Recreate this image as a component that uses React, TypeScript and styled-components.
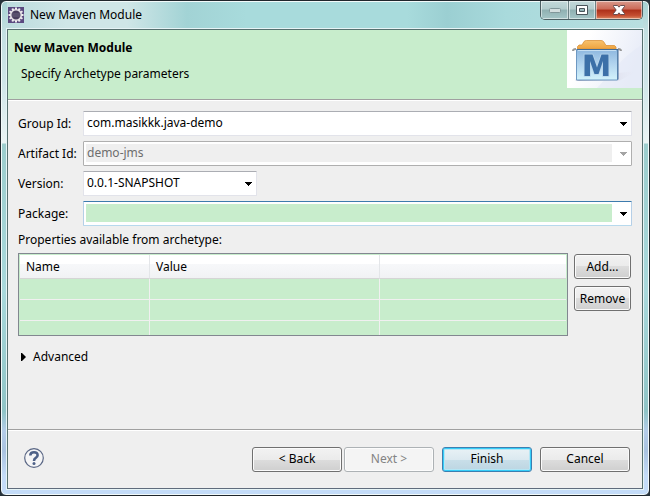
import React, { useState } from "react";
import styled, { createGlobalStyle, css } from "styled-components";

const font = '"Noto Sans", "Open Sans", sans-serif';

const GlobalStyle = createGlobalStyle`
  *, *::before, *::after { box-sizing: border-box; }
  body { margin: 0; background: #26323a; font: 12px/16px ${font}; color: #000; }
  button, select, input { font: inherit; color: inherit; margin: 0; }
  h1, h2, p { margin: 0; font: inherit; }
`;

const glassSides =
  "linear-gradient(to bottom, #a6d2d3 0, #c3dfe1 30px, #cfe5e8 80px, #eaf4f4 142px, #9ccdcd 143px, #a9d9dc 290px, #8fc4c6 410px, #b4cce8 430px, #a9c3e0 450px, #c4dcf8 475px, #c4dcf8 100%)";

const Window = styled.main`
  display: flex;
  flex-direction: column;
  min-height: 100vh;
  border: 1px solid #20262c;
  border-radius: 6px;
  background: ${glassSides};
  box-shadow: inset 0 0 0 1px #f2fafa;
`;

const TitleBar = styled.header`
  display: flex;
  align-items: center;
  height: 28px;
  margin: 0 6px;
  background: linear-gradient(to right, #bddcde, #cfe6e7 60px, #cfe6e7 120px, #a2d3d5 180px, #a8dbdc 240px, #a8dbdc 400px, #9bcfd2 440px, #a9dadc 500px, #b9dfe0);
  background-size: 100% 27px;
  background-position: 0 1px;
  background-repeat: no-repeat;
`;

const AppIcon = styled.svg`
  width: 16px;
  height: 16px;
  margin-left: 1px;
`;

const Title = styled.h1`
  flex: 1;
  margin-left: 6px;
`;

const WindowControls = styled.div`
  display: flex;
  align-self: flex-start;
  height: 19px;
  border: 1px solid #4c5f63;
  border-top: 0;
  border-radius: 0 0 5px 5px;
  overflow: hidden;
`;

const ControlButton = styled.button<{ $kind: "plain" | "close" }>`
  display: flex;
  align-items: center;
  justify-content: center;
  width: ${(p) => (p.$kind === "close" ? 47 : 27)}px;
  padding: 0;
  border: 0;
  border-left: ${(p) => (p.$kind === "close" ? "1px solid #4c2a28" : "0")};
  box-shadow: inset 0 0 0 1px rgba(255, 255, 255, 0.5);
  background: ${(p) =>
    p.$kind === "close"
      ? "linear-gradient(#d99a8c 0, #cb6a58 45%, #ad3019 50%, #c44d31 80%, #dc8a63)"
      : "linear-gradient(#c3d9da 0, #b3cccd 45%, #8fb0b2 50%, #a5c6c7)"};
  & + & { border-left: 1px solid #6d8285; }
`;

const Client = styled.div`
  display: flex;
  flex: 1;
  flex-direction: column;
  margin: 0 6px 6px;
  border: 1px solid #56706f;
  border-bottom-color: #5f6b7c;
  outline: 1px solid #e6f4f6;
  background: #efefef;
`;

const Banner = styled.section`
  display: flex;
  justify-content: space-between;
  align-items: flex-start;
  height: 71px;
  background: #c8edcc;
  border-bottom: 1px solid #fff;
  box-shadow: inset 0 -1px 0 #a0a0a0;
`;

const BannerText = styled.div`
  padding: 10px 6px;
`;

const BannerTitle = styled.h2`
  font-weight: 700;
`;

const BannerMessage = styled.p`
  padding: 10px 7px;
`;

const BannerArt = styled.svg`
  flex: none;
  width: 75px;
  height: 58px;
`;

const Content = styled.section`
  flex: 1;
  padding: 10px;
`;

const Fields = styled.div`
  display: grid;
  grid-template-columns: 65px 1fr;
  row-gap: 5px;
  align-items: center;
`;

const FieldLabel = styled.label`
  white-space: nowrap;
`;

type Tone = "normal" | "disabled" | "focus";

const comboTones = {
  normal: css`border-color: #abadb3 #e2e3ea #e2e3ea;`,
  disabled: css`border-color: #afafaf;`,
  focus: css`border-color: #3d7bad #b5cfe7 #b7d9ed;`,
};

const fillTones = { normal: "#fff", disabled: "#efefef", focus: "#c8edcc" };

const Combo = styled.div<{ $tone: Tone; $short?: boolean }>`
  position: relative;
  width: ${(p) => (p.$short ? "174px" : "auto")};
  height: 25px;
  padding: 2px;
  border: 1px solid;
  border-radius: 1px;
  background: #fff;
  ${(p) => comboTones[p.$tone]}
`;

const ComboSelect = styled.select<{ $tone: Tone }>`
  display: block;
  width: 100%;
  height: 18px;
  padding: 0 18px 0 1px;
  border: 0;
  outline: 0;
  appearance: none;
  line-height: 16px;
  color: ${(p) => (p.$tone === "disabled" ? "#6d6d6d" : "#000")};
  opacity: 1;
  background: linear-gradient(${(p) => fillTones[p.$tone]}, ${(p) => fillTones[p.$tone]}) no-repeat;
  background-size: calc(100% - 17px) 100%;
`;

const ComboArrow = styled.svg`
  position: absolute;
  top: 10px;
  right: 4px;
  width: 7px;
  height: 4px;
  pointer-events: none;
`;

const SectionLabel = styled.p`
  margin-top: 6px;
`;

const Properties = styled.div`
  display: flex;
  align-items: flex-start;
  gap: 5px;
  margin-top: 5px;
`;

const TableFrame = styled.div`
  flex: 1;
  height: 83px;
  padding: 1px;
  border: 1px solid #828790;
  background: #c8edcc;
  overflow: hidden;
`;

const Table = styled.table`
  width: 100%;
  table-layout: fixed;
  border-collapse: separate;
  border-spacing: 0;
`;

const HeadCell = styled.th<{ $width?: number }>`
  width: ${(p) => (p.$width ? `${p.$width}px` : "auto")};
  height: 24px;
  padding: 0 6px;
  border-right: 1px solid #e4e6e9;
  border-bottom: 1px solid #d5d5d5;
  background: linear-gradient(#fff 9px, #f7f8fa 9px, #f1f2f4);
  font-weight: 400;
  text-align: left;
  &:last-child { border-right: 0; }
`;

const Cell = styled.td`
  height: 21px;
  padding: 0;
  border-right: 1px solid #f0f0f0;
  border-bottom: 1px solid #f0f0f0;
  &:last-child { border-right: 0; }
`;

const SideButtons = styled.div`
  display: flex;
  flex-direction: column;
  gap: 7px;
  padding: 1px;
`;

const buttonTones = {
  normal: css`
    border-color: #707070;
    background: linear-gradient(#f2f2f2, #ebebeb 50%, #dddddd 50%, #cfcfcf);
    box-shadow: inset 0 0 0 1px #fbfbfb;
  `,
  disabled: css`
    border-color: #adb2b5;
    background: #f4f4f4;
    box-shadow: inset 0 0 0 1px #fcfcfc;
    color: #838383;
  `,
  primary: css`
    border-color: #3c7fb1;
    background: linear-gradient(#e9f2f6, #dbe9f0 50%, #c9dfe9 50%, #bcd5e2);
    box-shadow: inset 0 0 0 1px #35cdf8, inset 0 0 0 2px #b5e6f5;
  `,
};

const PushButton = styled.button<{ $tone?: keyof typeof buttonTones; $wide?: boolean }>`
  width: ${(p) => (p.$wide ? 90 : 57)}px;
  height: 25px;
  padding: 0;
  border: 1px solid;
  border-radius: 3px;
  white-space: nowrap;
  ${(p) => buttonTones[p.$tone ?? "normal"]}
`;

const Advanced = styled.button`
  display: flex;
  align-items: center;
  gap: 7px;
  margin-top: 13px;
  padding: 0 3px;
  border: 0;
  background: none;
`;

const Footer = styled.footer`
  display: flex;
  align-items: center;
  height: 59px;
  padding: 0 12px 0 16px;
  border-top: 1px solid #a0a0a0;
  box-shadow: inset 0 1px 0 #fff;
`;

const HelpButton = styled.button`
  display: flex;
  margin-right: auto;
  padding: 0 0 2px;
  border: 0;
  background: none;
`;

const ButtonPair = styled.div`
  display: flex;
  gap: 2px;
`;

const Actions = styled.div`
  display: flex;
  gap: 8px;
`;

const teeth = Array.from({ length: 12 }, (_, i) => i * 30);

type ComboFieldProps = { id: string; label: string; value: string; tone?: Tone; short?: boolean };

function ComboField({ id, label, value, tone = "normal", short }: ComboFieldProps) {
  return (
    <>
      <FieldLabel htmlFor={id}>{label}</FieldLabel>
      <Combo $tone={tone} $short={short}>
        <ComboSelect id={id} $tone={tone} disabled={tone === "disabled"} defaultValue={value}>
          <option value={value}>{value}</option>
        </ComboSelect>
        <ComboArrow viewBox="0 0 7 4" shapeRendering="crispEdges" aria-hidden="true">
          <path d="M0 0h7v1H6v1H5v1H4v1H3V3H2V2H1V1H0z" fill={tone === "disabled" ? "#a5a5a5" : "#000"} />
        </ComboArrow>
      </Combo>
    </>
  );
}

function EclipseIcon() {
  return (
    <AppIcon viewBox="0 0 16 16" aria-hidden="true">
      <rect width="16" height="16" fill="#5b4a80" />
      <g fill="#f0edf0">
        {teeth.map((a) => (
          <rect key={a} x="7" y="0.500" width="2" height="3" transform={`rotate(${a} 8 8)`} />
        ))}
      </g>
      <circle cx="8" cy="8" r="5.300" fill="#4a3f5e" stroke="#e8e4e8" strokeWidth="1.600" />
      <path d="M3.800 7h8.400M3.800 9h8.400" stroke="#77708a" strokeWidth="0.700" />
    </AppIcon>
  );
}

function MavenArt() {
  return (
    <BannerArt viewBox="0 0 75 58" aria-hidden="true">
      <defs>
        <linearGradient id="sky" x1="0" y1="0" x2="1" y2="0.3">
          <stop offset="0.3" stopColor="#fff" />
          <stop offset="1" stopColor="#e9edf8" />
        </linearGradient>
        <linearGradient id="box" x1="0" y1="0" x2="0" y2="1">
          <stop offset="0" stopColor="#8db7df" />
          <stop offset="0.5" stopColor="#b3d5ef" />
          <stop offset="1" stopColor="#d3f3fb" />
        </linearGradient>
        <linearGradient id="folder" x1="0" y1="0" x2="0" y2="1">
          <stop offset="0" stopColor="#f8c16c" />
          <stop offset="1" stopColor="#eda33f" />
        </linearGradient>
        <linearGradient id="shade" x1="0" y1="0" x2="1" y2="0">
          <stop offset="0" stopColor="#a5a0b5" />
          <stop offset="1" stopColor="#e8e8f2" stopOpacity="0" />
        </linearGradient>
      </defs>
      <rect width="75" height="58" fill="url(#sky)" />
      <path d="M30 58C45 42 57 25 75 15v43z" fill="#e4e9f6" opacity="0.6" />
      <path d="M51 43L70 41 52 51H12l-4-1z" fill="url(#shade)" />
      <path d="M10.500 19v-2.500L12 15h3l2-3.500q1-1 2.500-1H34q1.500 0 2.500 1l2.500 4h8.500l1.500 1.500V19z" fill="url(#folder)" stroke="#d9923a" strokeWidth="0.800" />
      <path d="M6 21q0-2 3-2M54 21q0-2-3-2" fill="none" stroke="#999" strokeWidth="2" />
      <path d="M9.500 19.500h41v30.500h-41z" fill="url(#box)" stroke="#6d98c2" />
      <path d="M10 19.500h41v30" fill="none" stroke="#426b95" />
      <path d="M11 20.500h38" stroke="#c6dff2" />
      <path d="M17.500 46V24.500h8l4.500 13 4.500-13h7V46h-5.500V31l-4.500 13h-4L23 31v15z" fill="#3c70a8" stroke="#b9d6ec" strokeWidth="1.500" paintOrder="stroke" />
    </BannerArt>
  );
}

export default function App() {
  const [expanded, setExpanded] = useState(false);
  return (
    <>
      <GlobalStyle />
      <Window>
        <TitleBar>
          <EclipseIcon />
          <Title>New Maven Module</Title>
          <WindowControls>
            <ControlButton $kind="plain" aria-label="Minimize">
              <svg width="12" height="5" viewBox="0 0 12 5"><rect x="0.5" y="0.5" width="11" height="4" rx="1" fill="#d3dedf" stroke="#809699" /></svg>
            </ControlButton>
            <ControlButton $kind="plain" aria-label="Maximize">
              <svg width="12" height="10" viewBox="0 0 12 10"><path fillRule="evenodd" d="M0.500 0.500h11v9h-11zM3.500 3.500v3h5v-3z" fill="#fff" stroke="#4a555b" /></svg>
            </ControlButton>
            <ControlButton $kind="close" aria-label="Close">
              <svg width="12" height="10" viewBox="0 0 12 10"><path d="M0.500 0.500H4.500L6 2.200 7.500 0.500h4v1L8.800 5l2.700 3.500v1h-4L6 7.800 4.500 9.500h-4v-1L3.200 5 0.500 1.500z" fill="#fff" stroke="#5b4346" strokeWidth="0.900" /></svg>
            </ControlButton>
          </WindowControls>
        </TitleBar>
        <Client>
          <Banner>
            <BannerText>
              <BannerTitle>New Maven Module</BannerTitle>
              <BannerMessage>Specify Archetype parameters</BannerMessage>
            </BannerText>
            <MavenArt />
          </Banner>
          <Content>
            <Fields>
              <ComboField id="group" label="Group Id:" value="com.masikkk.java-demo" />
              <ComboField id="artifact" label="Artifact Id:" value="demo-jms" tone="disabled" />
              <ComboField id="version" label="Version:" value="0.0.1-SNAPSHOT" short />
              <ComboField id="package" label="Package:" value="" tone="focus" />
            </Fields>
            <SectionLabel id="properties">Properties available from archetype:</SectionLabel>
            <Properties>
              <TableFrame>
                <Table aria-labelledby="properties">
                  <thead>
                    <tr>
                      <HeadCell $width={130}>Name</HeadCell>
                      <HeadCell $width={230}>Value</HeadCell>
                      <HeadCell />
                    </tr>
                  </thead>
                  <tbody>
                    {[0, 1, 2].map((row) => (
                      <tr key={row}><Cell /><Cell /><Cell /></tr>
                    ))}
                  </tbody>
                </Table>
              </TableFrame>
              <SideButtons>
                <PushButton>Add...</PushButton>
                <PushButton>Remove</PushButton>
              </SideButtons>
            </Properties>
            <Advanced aria-expanded={expanded} onClick={() => setExpanded(!expanded)}>
              <svg width="5" height="8" viewBox="0 0 5 8" aria-hidden="true"><path d="M0 0h1l4 4-4 4H0z" /></svg>
              Advanced
            </Advanced>
          </Content>
          <Footer>
            <HelpButton aria-label="Help">
              <svg width="20" height="20" viewBox="0 0 20 20">
                <circle cx="10" cy="10" r="9.300" fill="#f5f5f6" stroke="#5a6785" strokeWidth="1.200" />
                <path d="M6.300 7.500Q6.300 4.300 10 4.300t3.600 3q0 1.600-1.800 2.600T10 13" fill="none" stroke="#4f6288" strokeWidth="2.600" />
                <circle cx="10" cy="15.500" r="1.500" fill="#4f6288" />
              </svg>
            </HelpButton>
            <Actions>
              <ButtonPair>
                <PushButton $wide>&lt; Back</PushButton>
                <PushButton $wide $tone="disabled" disabled>Next &gt;</PushButton>
              </ButtonPair>
              <PushButton $wide $tone="primary">Finish</PushButton>
              <PushButton $wide>Cancel</PushButton>
            </Actions>
          </Footer>
        </Client>
      </Window>
    </>
  );
}
